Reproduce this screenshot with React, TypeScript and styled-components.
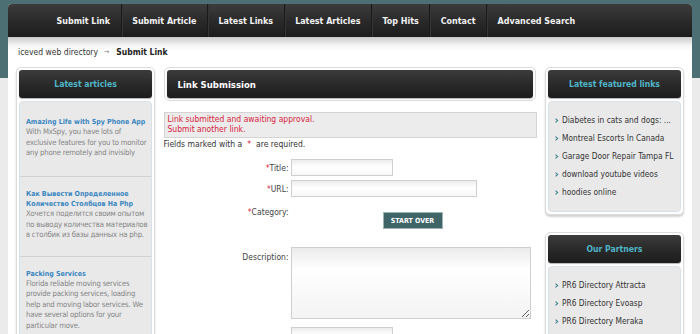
import styled, { createGlobalStyle } from 'styled-components'

//* Page level styles
const GlobalStyle = createGlobalStyle`
   html, body {
      margin: 0;
      padding: 0;
   }
   body {
      background: linear-gradient(#4b6f72 0, #4b6f72 78px, #ebebeb 78px);
      font-family: 'DejaVu Sans Condensed', 'DejaVu Sans', sans-serif;
      font-stretch: condensed;
      font-size: 8.5px;
      color: #333;
      min-height: 334px;
   }
`

const darkBar = `
   background: linear-gradient(#3c3c3c 0%, #2a2a2a 50%, #1c1c1c 100%);
`

const Wrapper = styled.div`
   margin: 4px 8px 0;
   background: #fff;
   border-radius: 4px 4px 0 0;
   height: 330px;
   overflow: hidden;
`

const NavBar = styled.nav`
   ${darkBar}
   height: 33px;
   display: flex;
   align-items: stretch;
   padding-left: 38px;
`

const NavItem = styled.a<{ $first?: boolean }>`
   display: flex;
   align-items: center;
   padding: 0 10.5px;
   color: #f2f2f2;
   font-weight: bold;
   font-size: 8.9px;
   text-decoration: none;
   border-left: ${p => (p.$first ? 'none' : '1px solid #1a1a1a')};
   box-shadow: ${p => (p.$first ? 'none' : 'inset 1px 0 0 #353535')};
`

const Crumbs = styled.div`
   height: 30px;
   padding: 0 10px;
   display: flex;
   align-items: center;
   background: linear-gradient(#c9c9c9 0, #f4f4f4 8px, #fff 14px);
   b {
      color: #222;
   }
   .arrow {
      color: #777;
      font-size: 7px;
      margin: 0 7px 0 6px;
   }
`

const Columns = styled.div`
   display: grid;
   grid-template-columns: 139px 373px 139px;
   column-gap: 8.5px;
   padding: 0 8px;
   align-items: start;
`

const SideStack = styled.div`
   display: flex;
   flex-direction: column;
   gap: 17px;
`

const SideBox = styled.section`
   border: 1px solid #dcdcdc;
   border-radius: 5px;
   padding: 2px;
   background: #fff;
   box-shadow: 0 2px 2px rgba(0, 0, 0, 0.18);
`

const BoxHead = styled.h3<{ $align?: 'left' | 'center' }>`
   ${darkBar}
   margin: 0;
   height: 28px;
   border-radius: 3px;
   display: flex;
   align-items: center;
   justify-content: ${p => (p.$align === 'left' ? 'flex-start' : 'center')};
   padding: 0 ${p => (p.$align === 'left' ? '11px' : '0')};
   color: ${p => (p.$align === 'left' ? '#fff' : '#4fb5c8')};
   font-size: ${p => (p.$align === 'left' ? '9.5px' : '8.6px')};
   font-weight: bold;
   box-shadow: 0 1px 1px rgba(0, 0, 0, 0.3);
`

const SideBody = styled.div<{ $pad?: number }>`
   margin-top: 3px;
   padding-top: ${p => p.$pad ?? 0}px;
   background: #e9e9e9;
   border: 1px solid #d9e1e8;
   border-radius: 4px;
`

const Article = styled.div`
   padding: 12px 0 15px 6px;
   line-height: 10.4px;
   font-size: 7.7px;
   letter-spacing: -0.2px;
   color: #858585;
   &:first-child {
      padding-bottom: 17px;
   }
   & + & {
      border-top: 1px solid #d2d2d2;
   }
   a {
      display: block;
      color: #3a86c0;
      font-size: 7px;
      letter-spacing: 0;
      font-weight: bold;
      text-decoration: none;
   }
`

const LinkList = styled.ul`
   list-style: none;
   margin: 0;
   padding: 9px 6px 10px;
   li {
      display: flex;
      align-items: center;
      gap: 3px;
      height: 18px;
      color: #333;
      font-size: 8.3px;
      white-space: nowrap;
   }
   svg {
      flex-shrink: 0;
   }
`

const Chevron = () => (
   <svg width='4' height='5' viewBox='0 0 4 5'>
      <path d='M0.5 0 L3.5 2.5 L0.5 5 L0.5 3.6 L2 2.5 L0.5 1.4 Z' fill='#3b7f8e' />
   </svg>
)

const Main = styled.main`
   display: flex;
   flex-direction: column;
`

const TitleBox = styled.div`
   border: 1px solid #dcdcdc;
   border-radius: 5px;
   padding: 2px;
   margin-right: 1px;
`

const Notice = styled.div`
   margin-top: 11px;
   background: #ececec;
   border: 1px solid #d4d4d4;
   padding: 2px 3px 3px;
   line-height: 9.5px;
   color: #d6243c;
`

const Required = styled.p`
   margin: 1px 0 0;
   line-height: 10px;
   span {
      color: #d6243c;
      margin: 0 5px 0 5px;
   }
`

const Form = styled.form`
   margin-top: 10px;
   display: grid;
   grid-template-columns: 125px 1fr;
   column-gap: 2px;
   row-gap: 4px;
`

const Label = styled.label<{ $pad?: number }>`
   text-align: right;
   padding-top: ${p => p.$pad ?? 4}px;
   color: #444;
   i {
      color: #d6243c;
      font-style: normal;
   }
`

const Field = styled.input<{ $w: number }>`
   box-sizing: border-box;
   width: ${p => p.$w}px;
   height: 17px;
   margin: 0;
   border: 1px solid #cfcfcf;
   background: linear-gradient(#ececec, #fff 45%, #f7f7f7);
   outline: none;
`

const Area = styled.textarea`
   box-sizing: border-box;
   width: 240px;
   height: 72px;
   margin: 4px 0 0;
   border: 1px solid #cfcfcf;
   background: linear-gradient(#ebebeb, #fff 30%, #f3f3f3);
   outline: none;
   resize: both;
`

const StartOver = styled.button`
   margin: 11px 0 10px 92px;
   width: 60px;
   height: 17px;
   border: 1px solid #9fb3b5;
   background: #3f6569;
   color: #fff;
   font-family: inherit;
   font-stretch: condensed;
   font-size: 7px;
   font-weight: bold;
   padding: 0;
`

const articles = [
   {
      title: 'Amazing Life with Spy Phone App',
      text: 'With MxSpy, you have lots of exclusive features for you to monitor any phone remotely and invisibly'
   },
   {
      title: 'Как Вывести Определенное Количество Столбцов На Php',
      text: 'Хочется поделится своим опытом по выводу количества материалов в столбик из базы данных на php.'
   },
   {
      title: 'Packing Services',
      text: 'Florida reliable moving services provide packing services, loading help and moving labor services. We have several options for your particular move.'
   }
]

const featured = [
   'Diabetes in cats and dogs: ...',
   'Montreal Escorts In Canada',
   'Garage Door Repair Tampa FL',
   'download youtube videos',
   'hoodies online'
]

const partners = ['PR6 Directory Attracta', 'PR6 Directory Evoasp', 'PR6 Directory Meraka']

const menu = ['Submit Link', 'Submit Article', 'Latest Links', 'Latest Articles', 'Top Hits', 'Contact', 'Advanced Search']

const App = () => {
   return (
      <>
         <GlobalStyle />
         <Wrapper>
            <NavBar>
               {menu.map((m, i) => (
                  <NavItem key={m} $first={i === 0} href='#'>{m}</NavItem>
               ))}
            </NavBar>
            <Crumbs>
               <span>iceved web directory</span>
               <span className='arrow'>→</span>
               <b>Submit Link</b>
            </Crumbs>
            <Columns>
               <SideBox>
                  <BoxHead>Latest articles</BoxHead>
                  <SideBody $pad={3}>
                     {articles.map(a => (
                        <Article key={a.title}>
                           <a href='#'>{a.title}</a>
                           {a.text}
                        </Article>
                     ))}
                  </SideBody>
               </SideBox>
               <Main>
                  <TitleBox>
                     <BoxHead $align='left'>Link Submission</BoxHead>
                  </TitleBox>
                  <Notice>
                     Link submitted and awaiting approval.<br />
                     Submit another link.
                  </Notice>
                  <Required>Fields marked with a<span>*</span>are required.</Required>
                  <Form>
                     <Label><i>*</i>Title:</Label>
                     <Field $w={102} />
                     <Label><i>*</i>URL:</Label>
                     <Field $w={186} />
                     <Label $pad={6}><i>*</i>Category:</Label>
                     <div>
                        <StartOver type='button'>START OVER</StartOver>
                     </div>
                     <Label $pad={9}>Description:</Label>
                     <Area />
                     <span />
                     <Field $w={102} style={{ marginTop: 4 }} />
                  </Form>
               </Main>
               <SideStack>
                  <SideBox>
                     <BoxHead>Latest featured links</BoxHead>
                     <SideBody>
                        <LinkList>
                           {featured.map(f => (
                              <li key={f}><Chevron />{f}</li>
                           ))}
                        </LinkList>
                     </SideBody>
                  </SideBox>
                  <SideBox>
                     <BoxHead>Our Partners</BoxHead>
                     <SideBody>
                        <LinkList>
                           {partners.map(f => (
                              <li key={f}><Chevron />{f}</li>
                           ))}
                        </LinkList>
                     </SideBody>
                  </SideBox>
               </SideStack>
            </Columns>
         </Wrapper>
      </>
   )
}

export default App
